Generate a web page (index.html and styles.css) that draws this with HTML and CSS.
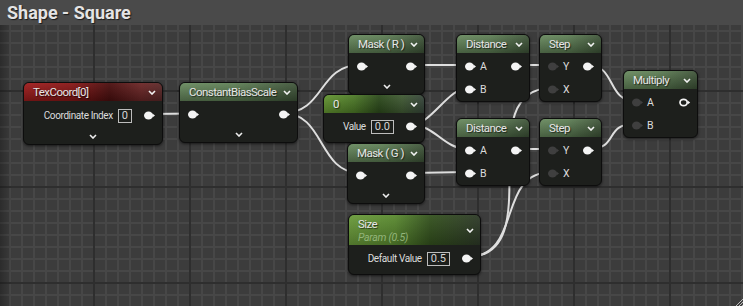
FILE: index.html
```html
<!DOCTYPE html>
<html>

<head>
    <meta charset="UTF-8">
    <title>Shape - Square</title>
    <link rel="stylesheet" href="styles.css">
</head>

<body>
    <svg class="defs" width="0" height="0">
        <symbol id="pin" viewBox="0 0 12 9">
            <ellipse cx="4.5" cy="4.5" rx="4.5" ry="4"></ellipse>
            <polygon points="8.4,2.6 11,4.5 8.4,6.4"></polygon>
        </symbol>
        <symbol id="pin-open" viewBox="0 0 12 9">
            <ellipse cx="4.6" cy="4.5" rx="3.6" ry="3.2" fill="none" stroke="currentColor" stroke-width="1.7"></ellipse>
            <polygon points="8.6,2.6 11.2,4.5 8.6,6.4"></polygon>
        </symbol>
        <symbol id="chev" viewBox="0 0 8 5">
            <polyline points="1,1 4,4 7,1" fill="none" stroke="currentColor" stroke-width="1.6"></polyline>
        </symbol>
    </svg>

    <div class="editor">
        <div class="titlebar">Shape - Square</div>

        <!-- wires sit under the nodes, ends are hidden by the node bodies -->
        <svg class="wires" width="743" height="306" viewBox="0 0 743 306">
            <path d="M150 114 L192 113.5"></path>
            <path d="M283 113 C325 113 318 65 360 65"></path>
            <path d="M283 113 C325 113 318 173 360 173"></path>
            <path d="M411 65 L468 65"></path>
            <path d="M411 125 C431 125 448 88 468 88"></path>
            <path d="M411 125 C436 125 443 149 468 149"></path>
            <path d="M411 173 L468 172"></path>
            <path d="M517 65 L552 65"></path>
            <path d="M517 149 L552 149"></path>
            <path d="M467 257 C552 257 467 88 552 88"></path>
            <path d="M467 257 C524 257 495 172 552 172"></path>
            <path d="M588 65 C616 65 607 101 635 101"></path>
            <path d="M588 149 C620 149 603 124 635 124"></path>
        </svg>

        <div class="node" style="left: 23px; top: 82px; width: 140px;">
            <div class="head red">
                <span class="name">TexCoord[0]</span>
                <svg class="chev"><use href="#chev"></use></svg>
            </div>
            <div class="body">
                <div class="row value tall">
                    <span class="label">Coordinate Index</span>
                    <span class="box">0</span>
                    <svg class="pin out"><use href="#pin"></use></svg>
                </div>
            </div>
            <div class="foot"><svg class="chev"><use href="#chev"></use></svg></div>
        </div>

        <div class="node" style="left: 179px; top: 82px; width: 119px;">
            <div class="head green">
                <span class="name">ConstantBiasScale</span>
                <svg class="chev"><use href="#chev"></use></svg>
            </div>
            <div class="body">
                <div class="row">
                    <svg class="pin"><use href="#pin"></use></svg>
                    <span class="spacer"></span>
                    <svg class="pin out"><use href="#pin"></use></svg>
                </div>
            </div>
            <div class="foot"><svg class="chev"><use href="#chev"></use></svg></div>
        </div>

        <div class="node" style="left: 348px; top: 34px; width: 77px;">
            <div class="head green">
                <span class="name">Mask ( R )</span>
                <svg class="chev"><use href="#chev"></use></svg>
            </div>
            <div class="body">
                <div class="row">
                    <svg class="pin"><use href="#pin"></use></svg>
                    <span class="spacer"></span>
                    <svg class="pin out"><use href="#pin"></use></svg>
                </div>
            </div>
            <div class="foot"><svg class="chev"><use href="#chev"></use></svg></div>
        </div>

        <div class="node" style="left: 323px; top: 94px; width: 102px;">
            <div class="head const">
                <span class="name">0</span>
                <svg class="chev"><use href="#chev"></use></svg>
            </div>
            <div class="body padded">
                <div class="row value">
                    <span class="label">Value</span>
                    <span class="box">0.0</span>
                    <svg class="pin out"><use href="#pin"></use></svg>
                </div>
            </div>
        </div>

        <div class="node" style="left: 347px; top: 143px; width: 78px;">
            <div class="head green">
                <span class="name">Mask ( G )</span>
                <svg class="chev"><use href="#chev"></use></svg>
            </div>
            <div class="body">
                <div class="row">
                    <svg class="pin"><use href="#pin"></use></svg>
                    <span class="spacer"></span>
                    <svg class="pin out"><use href="#pin"></use></svg>
                </div>
            </div>
            <div class="foot"><svg class="chev"><use href="#chev"></use></svg></div>
        </div>

        <div class="node" style="left: 456px; top: 34px; width: 74px;">
            <div class="head green">
                <span class="name">Distance</span>
                <svg class="chev"><use href="#chev"></use></svg>
            </div>
            <div class="body">
                <div class="row">
                    <svg class="pin"><use href="#pin"></use></svg>
                    <span class="label">A</span>
                    <span class="spacer"></span>
                    <svg class="pin out"><use href="#pin"></use></svg>
                </div>
                <div class="row">
                    <svg class="pin"><use href="#pin"></use></svg>
                    <span class="label">B</span>
                </div>
            </div>
        </div>

        <div class="node" style="left: 456px; top: 118px; width: 74px;">
            <div class="head green">
                <span class="name">Distance</span>
                <svg class="chev"><use href="#chev"></use></svg>
            </div>
            <div class="body">
                <div class="row">
                    <svg class="pin"><use href="#pin"></use></svg>
                    <span class="label">A</span>
                    <span class="spacer"></span>
                    <svg class="pin out"><use href="#pin"></use></svg>
                </div>
                <div class="row">
                    <svg class="pin"><use href="#pin"></use></svg>
                    <span class="label">B</span>
                </div>
            </div>
        </div>

        <div class="node" style="left: 539px; top: 34px; width: 63px;">
            <div class="head green">
                <span class="name">Step</span>
                <svg class="chev"><use href="#chev"></use></svg>
            </div>
            <div class="body">
                <div class="row">
                    <svg class="pin dim"><use href="#pin"></use></svg>
                    <span class="label">Y</span>
                    <span class="spacer"></span>
                    <svg class="pin out"><use href="#pin"></use></svg>
                </div>
                <div class="row">
                    <svg class="pin dim"><use href="#pin"></use></svg>
                    <span class="label">X</span>
                </div>
            </div>
        </div>

        <div class="node" style="left: 539px; top: 118px; width: 63px;">
            <div class="head green">
                <span class="name">Step</span>
                <svg class="chev"><use href="#chev"></use></svg>
            </div>
            <div class="body">
                <div class="row">
                    <svg class="pin dim"><use href="#pin"></use></svg>
                    <span class="label">Y</span>
                    <span class="spacer"></span>
                    <svg class="pin out"><use href="#pin"></use></svg>
                </div>
                <div class="row">
                    <svg class="pin dim"><use href="#pin"></use></svg>
                    <span class="label">X</span>
                </div>
            </div>
        </div>

        <div class="node" style="left: 623px; top: 70px; width: 75px;">
            <div class="head green">
                <span class="name">Multiply</span>
                <svg class="chev"><use href="#chev"></use></svg>
            </div>
            <div class="body">
                <div class="row">
                    <svg class="pin dim"><use href="#pin"></use></svg>
                    <span class="label">A</span>
                    <span class="spacer"></span>
                    <svg class="pin out"><use href="#pin-open"></use></svg>
                </div>
                <div class="row">
                    <svg class="pin dim"><use href="#pin"></use></svg>
                    <span class="label">B</span>
                </div>
            </div>
        </div>

        <div class="node" style="left: 348px; top: 214px; width: 133px;">
            <div class="head param">
                <div class="name">
                    Size
                    <div class="sub">Param (0.5)</div>
                </div>
                <svg class="chev"><use href="#chev"></use></svg>
            </div>
            <div class="body padded">
                <div class="row value">
                    <span class="label">Default Value</span>
                    <span class="box">0.5</span>
                    <svg class="pin out"><use href="#pin"></use></svg>
                </div>
            </div>
        </div>

        <svg class="grip" width="8" height="8" viewBox="0 0 8 8">
            <path d="M8 1 L1 8 M8 4 L4 8 M8 7 L7 8"></path>
        </svg>
    </div>
</body>

</html>
```

FILE: styles.css
```css
* {
    box-sizing: border-box;
    margin: 0;
    padding: 0;
}

body {
    width: 743px;
    height: 306px;
    overflow: hidden;
    background-color: #3b3b3b;
    font-family: Roboto, "Liberation Sans", sans-serif;
    color: #e2e2e2;
}

.defs {
    position: absolute;
}

.editor {
    position: relative;
    width: 743px;
    height: 306px;
    background-color: #3c3c3c;
    background-image:
        linear-gradient(to right, rgba(0, 0, 0, 0.28), rgba(0, 0, 0, 0) 12px),
        linear-gradient(to right, #2e2e2e 2px, transparent 2px),
        linear-gradient(to bottom, #2e2e2e 2px, transparent 2px),
        linear-gradient(to right, #474747 2px, transparent 2px),
        linear-gradient(to bottom, #474747 2px, transparent 2px);
    background-size:
        100% 100%,
        96px 96px,
        96px 96px,
        12px 12px,
        12px 12px;
    background-position:
        0 0,
        -3px 0,
        0 -6px,
        9px 0,
        0 6px;
}

.titlebar {
    position: relative;
    z-index: 2;
    height: 25px;
    padding: 1px 0 0 7px;
    background-color: #4a4a4a;
    font-size: 18px;
    font-weight: bold;
    line-height: 24px;
    color: #e4e4e4;
    text-shadow: 1px 1px 1px #1a1a1a;
}

.wires {
    position: absolute;
    left: 0;
    top: 0;
}

.wires path {
    fill: none;
    stroke: #dedede;
    stroke-width: 2;
}

.node {
    position: absolute;
    display: flex;
    flex-direction: column;
    background-color: #1d1f1c;
    border: 1px solid #0d0d0d;
    border-radius: 6px;
    box-shadow: 0 1px 3px rgba(0, 0, 0, 0.6);
}

.head {
    display: flex;
    align-items: center;
    height: 18px;
    padding: 0 6px 0 9px;
    border-radius: 5px 5px 0 0;
    font-size: 11.5px;
    letter-spacing: -0.55px;
    color: #e6e6e6;
    text-shadow: 1px 1px 1px rgba(0, 0, 0, 0.6);
}

.head .name {
    flex: 1;
    white-space: nowrap;
}

.head .chev {
    width: 8px;
    height: 5px;
    color: #f2f2f2;
}

.head.green {
    background-image:
        linear-gradient(to bottom, rgba(255, 255, 255, 0.07), rgba(0, 0, 0, 0.3)),
        linear-gradient(to right, #67895d, #5d7e54 45%, #3e5438);
}

.head.red {
    background-image:
        linear-gradient(to bottom, rgba(255, 255, 255, 0.05), rgba(0, 0, 0, 0.3)),
        linear-gradient(to right, #a11d1d, #881717 35%, #4c0f0f 62%, #6d2727 85%, #5e2a2a);
}

.head.const {
    background-image:
        linear-gradient(to bottom, rgba(255, 255, 255, 0.06), rgba(0, 0, 0, 0.25)),
        linear-gradient(to right, #649631, #4d7a27 30%, #2c4a1b 55%, #405a33 78%, #36453a);
}

.head.param {
    height: 30px;
    align-items: center;
    background-image:
        linear-gradient(to bottom, rgba(255, 255, 255, 0.05), rgba(0, 0, 0, 0.25)),
        linear-gradient(to right, #6b9c3b, #5a8a30 35%, #34521e 62%, #2e3a28);
}

.head .sub {
    font-size: 10.5px;
    font-style: italic;
    letter-spacing: -0.3px;
    color: #93b57a;
    text-shadow: none;
    line-height: 13px;
}

.body {
    padding-top: 2px;
}

.body.padded {
    padding-bottom: 4px;
}

.row {
    display: flex;
    align-items: center;
    height: 23px;
    padding: 0 6px 0 8px;
    font-size: 10.5px;
    letter-spacing: -0.4px;
    color: #dcdcdc;
}

.row.tall {
    height: 25px;
}

.row.value {
    justify-content: flex-end;
}

.spacer {
    flex: 1;
}

.pin {
    width: 12px;
    height: 9px;
    fill: #f4f4f4;
    color: #f4f4f4;
}

.pin.dim {
    fill: #3f3f3f;
}

.row .label {
    margin-left: 3px;
    white-space: nowrap;
}

.row.value .label {
    margin-left: 0;
    font-size: 10px;
}

.box {
    margin-left: 5px;
    padding: 0 3px;
    height: 14px;
    line-height: 12px;
    border: 1px solid #bdbdbd;
    font-size: 11px;
    letter-spacing: 0;
    color: #d6d6d6;
}

.row.value .pin {
    margin-left: 12px;
}

.foot {
    display: flex;
    justify-content: center;
    align-items: center;
    height: 16px;
}

.foot .chev {
    width: 8px;
    height: 5px;
    color: #ededed;
}

.grip {
    position: absolute;
    right: 0;
    bottom: 0;
}

.grip path {
    stroke: #bbbbbb;
    stroke-width: 1;
}
```
